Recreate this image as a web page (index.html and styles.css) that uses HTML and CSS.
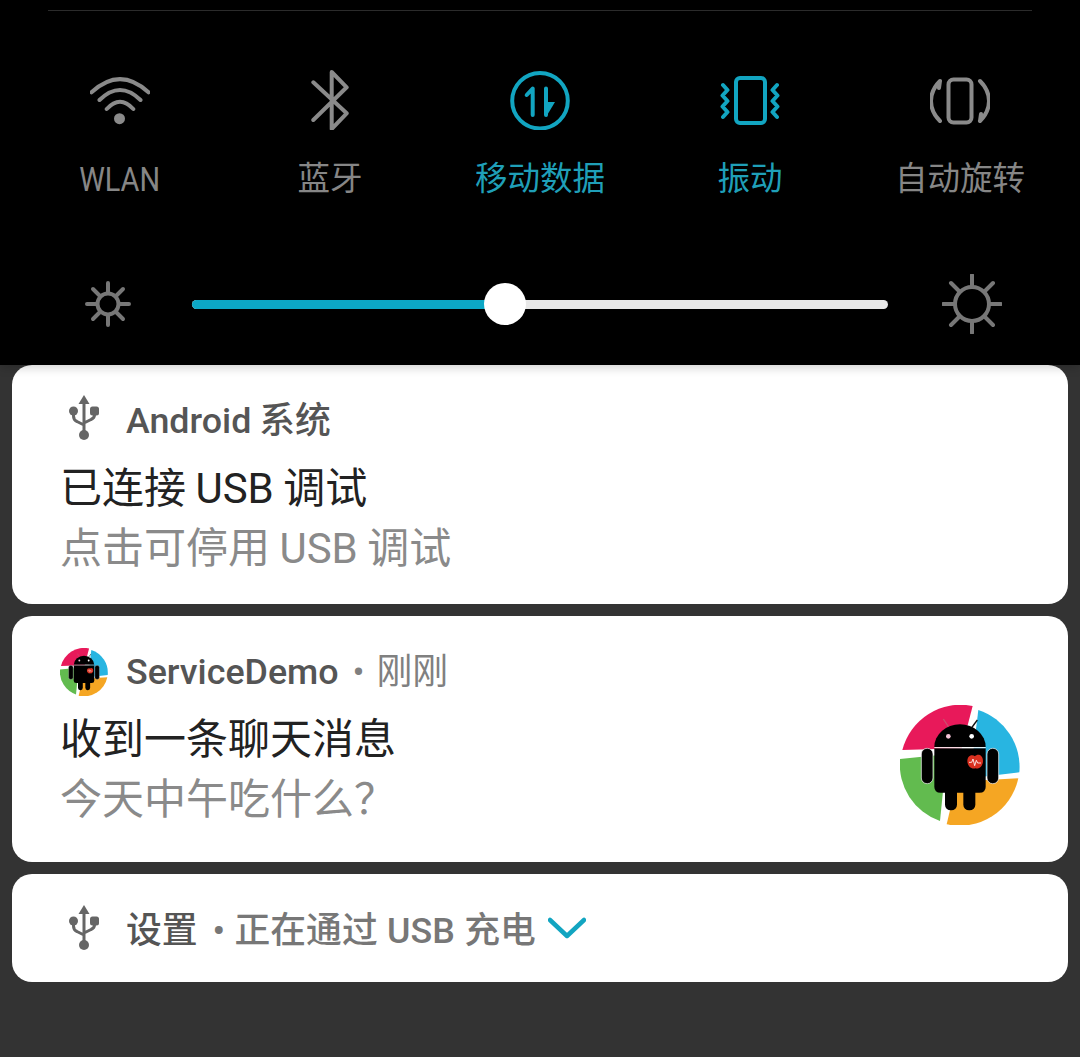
FILE: index.html
```html
<!DOCTYPE html>
<html lang="zh">
<head>
<meta charset="utf-8">
<title>Notification shade</title>
<link rel="stylesheet" href="styles.css">
</head>
<body>
<svg class="defs" width="0" height="0" aria-hidden="true">
  <symbol id="usb" viewBox="0 0 48 48">
    <path class="usb-fill" d="M24 1 L29.5 10 L18.5 10 Z"/>
    <path class="usb-line" d="M24 9 V38 M13.5 17 V22 Q13.5 26 17 27.5 L24 31 M34.5 17 V21 Q34.5 24 31 25.5 L24 29"/>
    <circle class="usb-fill" cx="13.5" cy="17" r="4.5"/>
    <rect class="usb-fill" x="30" y="12.5" width="9" height="9" rx="2.5"/>
    <circle class="usb-fill" cx="24" cy="41" r="5"/>
  </symbol>
  <symbol id="robot" viewBox="30 30 360 360">
    <path fill="#e8195a" d="M37 165 A180 180 0 0 1 248 33 L215 160 Z"/>
    <path fill="#28b5e1" d="M265 45 A180 180 0 0 1 388 232 L240 250 Z"/>
    <path fill="#f5a623" d="M385 250 A180 180 0 0 1 170 388 L200 260 Z"/>
    <path fill="#62bb4f" d="M150 378 A180 180 0 0 1 30 192 L170 178 Z"/>
    <path fill="none" stroke="#c9526f" stroke-width="4" d="M160 72 L180 102"/>
    <path fill="none" stroke="#111" stroke-width="4" d="M262 75 L242 102"/>
    <path fill="#000" d="M133 156 A77 68 0 0 1 287 156 Z"/>
    <path fill="#000" d="M133 160 H287 V275 Q287 293 268 293 H152 Q133 293 133 275 Z"/>
    <path fill="none" stroke="#fff" stroke-width="3" d="M133 158 H287"/>
    <rect fill="#000" stroke="#fff" stroke-width="2" x="94" y="160" width="35" height="106" rx="17"/>
    <rect fill="#000" stroke="#fff" stroke-width="2" x="291" y="160" width="35" height="106" rx="17"/>
    <rect fill="#000" x="165" y="270" width="36" height="76" rx="17"/>
    <rect fill="#000" x="220" y="270" width="36" height="76" rx="17"/>
    <circle fill="#f3c3d6" cx="175" cy="124" r="7"/>
    <circle fill="#fff" cx="245" cy="124" r="7"/>
    <path fill="#d9301f" d="M255 184 C262 176 278 178 279 198 C279 212 268 224 256 220 C244 224 232 212 232 198 C233 180 248 178 255 184 Z"/>
    <path fill="none" stroke="#fff" stroke-width="2.5" d="M237 202 H245 L249 192 L254 212 L259 196 L263 204 H273"/>
  </symbol>
</svg>

<section class="panel">
  <div class="divider"></div>
  <div class="tiles">
    <div class="tile">
      <svg class="tile-icon gray" viewBox="0 0 60 60">
        <path d="M1.5 22.3 Q30 -4 58.5 22.3 M9.5 30 Q30 10 50.5 30 M16.7 39 Q30 24.4 43.3 39"/>
        <circle class="solid" cx="29.5" cy="48.7" r="5.5"/>
      </svg>
      <span class="tile-label narrow">WLAN</span>
    </div>
    <div class="tile">
      <svg class="tile-icon gray" viewBox="0 0 60 60">
        <path d="M13.3 12.3 L46.7 43.3 L31.7 59 V2 L46.7 17.3 L13.3 50"/>
      </svg>
      <span class="tile-label">蓝牙</span>
    </div>
    <div class="tile on">
      <svg class="tile-icon teal" viewBox="0 0 60 60">
        <circle cx="30" cy="30.7" r="27.8"/>
        <path d="M16.7 25 L22.7 18.5 V45 M36 18.5 V45"/>
        <path class="solid" d="M36 32 H45 L36 47 Z"/>
      </svg>
      <span class="tile-label">移动数据</span>
    </div>
    <div class="tile on">
      <svg class="tile-icon teal" viewBox="0 0 60 60">
        <rect x="16" y="8" width="29" height="45" rx="4"/>
        <path d="M3 15 L7.5 20 L2.5 25.5 L7.5 31 L2.5 36.5 L7.5 42 L3 47 M57 15 L52.5 20 L57.5 25.5 L52.5 31 L57.5 36.5 L52.5 42 L57 47"/>
      </svg>
      <span class="tile-label">振动</span>
    </div>
    <div class="tile">
      <svg class="tile-icon gray" viewBox="0 0 60 60">
        <rect x="18.5" y="9.5" width="23" height="43" rx="5"/>
        <path d="M10 11 Q1 20 1 31 Q1 42 10 51 M10 11 L9 18 M50 11 Q59 20 59 31 Q59 42 50 51 M50 51 L51 44"/>
      </svg>
      <span class="tile-label">自动旋转</span>
    </div>
  </div>
  <div class="brightness">
    <svg class="sun" viewBox="0 0 60 60">
      <circle cx="30" cy="30" r="10.5"/>
      <path d="M30 9 V18 M30 42 V51 M9 30 H18 M42 30 H51 M15 15 L21.5 21.5 M38.5 38.5 L45 45 M15 45 L21.5 38.5 M38.5 21.5 L45 15"/>
    </svg>
    <div class="track">
      <div class="track-fill"></div>
      <div class="thumb"></div>
    </div>
    <svg class="sun" viewBox="0 0 60 60">
      <circle cx="30" cy="30" r="17"/>
      <path d="M30 1 V12 M30 48 V59 M1 30 H12 M48 30 H59 M9 9 L17.5 17.5 M42.5 42.5 L51 51 M9 51 L17.5 42.5 M42.5 17.5 L51 9"/>
    </svg>
  </div>
</section>

<main class="cards">
  <article class="card card-usb">
    <div class="card-head">
      <svg class="head-icon"><use href="#usb"/></svg>
      <span class="app">Android 系统</span>
    </div>
    <div class="title">已连接 USB 调试</div>
    <div class="sub">点击可停用 USB 调试</div>
  </article>

  <article class="card card-msg">
    <div class="msg-body">
      <div class="card-head">
        <svg class="head-icon"><use href="#robot"/></svg>
        <span class="app">ServiceDemo</span>
        <span class="meta">• 刚刚</span>
      </div>
      <div class="title">收到一条聊天消息</div>
      <div class="sub">今天中午吃什么？</div>
    </div>
    <svg class="large-logo"><use href="#robot"/></svg>
  </article>

  <article class="card card-min">
    <div class="card-head">
      <svg class="head-icon"><use href="#usb"/></svg>
      <span class="app">设置</span>
      <span class="meta medium">• 正在通过 USB 充电</span>
      <svg class="chevron" viewBox="0 0 38 22"><path d="M2 3 L19 19 L36 3"/></svg>
    </div>
  </article>
</main>
</body>
</html>
```

FILE: styles.css
```css
* { box-sizing: border-box; }

html, body {
  margin: 0;
  height: 1057px;
  background: #333333;
  overflow: hidden;
  font-family: Roboto, "Noto Sans CJK SC", sans-serif;
}

.defs { position: absolute; }

.panel {
  position: relative;
  z-index: 1;
  height: 365px;
  background: #000;
  padding: 10px 0 0;
  box-shadow: 0 2px 10px rgba(0, 0, 0, 0.2);
}

.divider {
  height: 1px;
  margin: 0 48px;
  background: #2b2b2b;
}

.tiles {
  display: grid;
  grid-template-columns: repeat(5, 210px);
  padding: 59px 15px 0;
}

.tile {
  display: flex;
  flex-direction: column;
  align-items: center;
  gap: 29px;
  color: #868686;
}

.tile.on { color: #1f9fb8; }

.tile-icon {
  width: 60px;
  height: 60px;
  fill: none;
  stroke-linecap: round;
  stroke-linejoin: round;
}

.gray { stroke: #8a8a8a; stroke-width: 4; }
.teal { stroke: #12a5c1; stroke-width: 4; }
.gray .solid { fill: #8a8a8a; stroke: none; }
.teal .solid { fill: #12a5c1; stroke: none; }

.tile-label {
  font-size: 32.5px;
  line-height: 40px;
  white-space: nowrap;
}

.narrow {
  font-size: 34px;
  transform: scaleX(0.85);
}

.brightness {
  display: flex;
  align-items: center;
  gap: 54px;
  padding: 75px 0 0 78px;
}

.sun {
  width: 60px;
  height: 60px;
  flex: none;
  fill: none;
  stroke: #777777;
  stroke-width: 4;
  stroke-linecap: round;
}

.track {
  position: relative;
  width: 696px;
  height: 9px;
  border-radius: 5px;
  background: #e8e8e8;
}

.track-fill {
  width: 313px;
  height: 100%;
  border-radius: 5px 0 0 5px;
  background: #0ca7c5;
}

.thumb {
  position: absolute;
  left: 292px;
  top: -17px;
  width: 42px;
  height: 42px;
  border-radius: 50%;
  background: #fff;
}

.cards {
  display: flex;
  flex-direction: column;
  gap: 12px;
  padding: 0 12px;
}

.card {
  background: #fff;
  border-radius: 20px;
  padding-left: 48px;
}

.card-usb { padding-top: 27px; padding-bottom: 26px; }
.card-usb .title { margin-top: 15px; }
.card-usb .app,
.card-min .app,
.card-min .meta { padding-top: 6px; }

.card-msg {
  display: flex;
  justify-content: space-between;
  align-items: flex-end;
  padding-top: 30px;
  padding-right: 48px;
  padding-bottom: 33px;
}

.card-min {
  display: flex;
  align-items: center;
  height: 108px;
}

.card-head {
  display: flex;
  align-items: center;
  height: 52px;
  font-size: 35.8px;
  line-height: 52px;
  white-space: nowrap;
}

.head-icon {
  width: 48px;
  height: 48px;
  flex: none;
  margin-right: 18px;
}

.usb-line { fill: none; stroke: #666666; stroke-width: 3; stroke-linecap: round; }
.usb-fill { fill: #666666; }

.app { font-weight: 500; color: #555555; word-spacing: -1px; }

.meta {
  margin-left: 14px;
  color: #808080;
  word-spacing: 3px;
}

.meta.medium {
  font-weight: 500;
  color: #777777;
  margin-left: 15px;
  word-spacing: 0.5px;
}

.title,
.sub {
  font-size: 42px;
  white-space: nowrap;
  word-spacing: -1px;
}

.title {
  margin-top: 12px;
  line-height: 60px;
  color: #222222;
}

.sub {
  line-height: 59px;
  color: #8a8a8a;
}

.large-logo {
  width: 120px;
  height: 120px;
  flex: none;
  margin-bottom: 4px;
}

.chevron {
  width: 38px;
  height: 22px;
  margin-left: 12px;
  fill: none;
  stroke: #12a5c1;
  stroke-width: 4.5;
  stroke-linecap: round;
  stroke-linejoin: round;
}
```
